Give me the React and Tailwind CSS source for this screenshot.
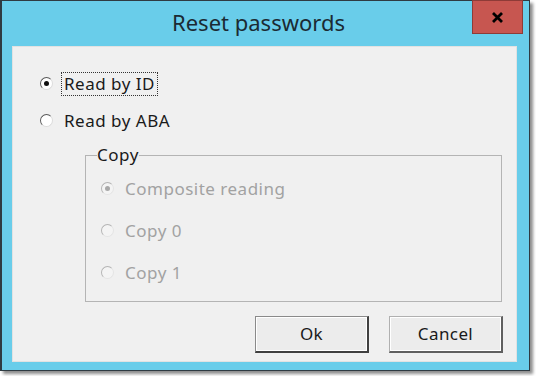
import React from 'react';

const font = { fontFamily: '"Noto Sans", "Open Sans", sans-serif' };

const Radio = ({ checked, disabled }) => (
  <span
    className={
      'relative inline-block w-[13px] h-[13px] shrink-0 rounded-full border ' +
      (disabled
        ? 'border-t-[#b4b4b4] border-l-[#b4b4b4] border-b-[#e4e4e4] border-r-[#e4e4e4] bg-[#f4f4f4]'
        : 'border-t-[#5a5a5a] border-l-[#5a5a5a] border-b-[#dcdcdc] border-r-[#dcdcdc] bg-white')
    }
  >
    {checked && (
      <span
        className={
          'absolute left-[3px] top-[3px] w-[5px] h-[5px] rounded-full ' +
          (disabled ? 'bg-[#a8a8a8]' : 'bg-[#111]')
        }
      />
    )}
  </span>
);

const Button = ({ children, primary }) => (
  <button
    className={
      'w-[114px] h-[37px] text-[17px] tracking-[0.4px] text-[#1a1a1a] bg-[#ececec] border ' +
      (primary
        ? 'border-t-[#8a8a8a] border-l-[#8a8a8a] border-b-[#404040] border-r-[#404040] border-b-2 border-r-2'
        : 'border-t-[#b0b0b0] border-l-[#b0b0b0] border-b-[#606060] border-r-[#606060] border-b-2 border-r-2')
    }
  >
    <span className="flex h-full w-full items-center justify-center border border-white">{children}</span>
  </button>
);

const App = () => {
  return (
    <div className="w-[536px] h-[376px] bg-white" style={font}>
      <div className="relative w-[530px] h-[371px] bg-[#69cdea] border border-[#2f3b42] border-l-2 shadow-[3px_3px_3px_rgba(0,0,0,0.45)] flex flex-col">
        <div className="h-[45px] flex items-center justify-center pr-[14px] text-[22px] text-[#1b2a33] pb-[2px]">
          Reset passwords
        </div>
        <div className="absolute right-[6px] top-[-1px] w-[51px] h-[34px] bg-[#c75650] border border-[#8e3b37] flex items-center justify-center">
          <svg width="13" height="11" viewBox="0 0 13 11">
            <path d="M2 1 L11 10 M11 1 L2 10" stroke="#000" strokeWidth="2.8" />
          </svg>
        </div>
        <div className="ml-[10px] w-[505px] h-[316px] bg-[#f0f0f0] border border-[#e2e2e2] text-[17px] tracking-[0.5px] text-[#1a1a1a] flex flex-col">
          <div className="mt-[25px] h-[24px] flex items-center">
            <span className="ml-[27px]"><Radio checked /></span>
            <span className="ml-[8px] px-[2px] h-[24px] flex items-center border border-dotted border-[#333]">Read by ID</span>
          </div>
          <div className="mt-[13px] h-[24px] flex items-center">
            <span className="ml-[27px]"><Radio /></span>
            <span className="ml-[8px] px-[2px] h-[24px] flex items-center border border-transparent">Read by ABA</span>
          </div>
          <fieldset className="mt-[11px] ml-[72px] w-[417px] border border-[#b4b4b4] pb-[7px]">
            <legend className="ml-[11px] h-[22px] leading-[22px] text-[#1a1a1a]">Copy</legend>
            <div className="mt-[2px] flex flex-col text-[#a2a2a2]">
              <div className="h-[42px] flex items-center">
                <span className="ml-[15px]"><Radio checked disabled /></span>
                <span className="ml-[11px]">Composite reading</span>
              </div>
              <div className="h-[42px] flex items-center">
                <span className="ml-[15px]"><Radio disabled /></span>
                <span className="ml-[11px]">Copy 0</span>
              </div>
              <div className="h-[42px] flex items-center">
                <span className="ml-[15px]"><Radio disabled /></span>
                <span className="ml-[11px]">Copy 1</span>
              </div>
            </div>
          </fieldset>
          <div className="mt-auto mb-[8px] flex justify-end gap-[20px] pr-[13px]">
            <Button primary>Ok</Button>
            <Button>Cancel</Button>
          </div>
        </div>
      </div>
    </div>
  );
};

export default App;
